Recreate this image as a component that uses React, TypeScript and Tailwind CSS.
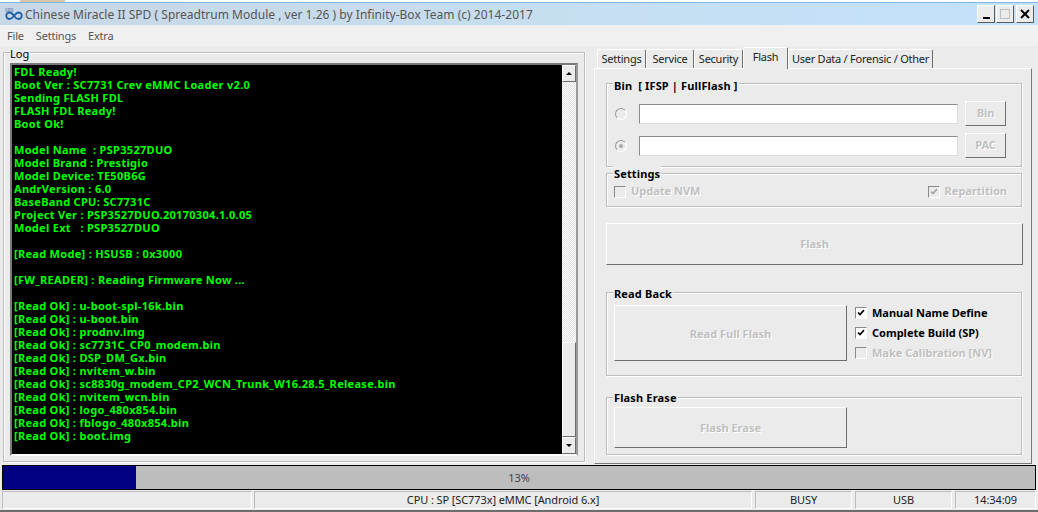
import React from "react";

const FONT = "font-['Noto_Sans','Open_Sans',sans-serif]";

const LOG_LINES = [
  "FDL Ready!",
  "Boot Ver : SC7731 Crev eMMC Loader v2.0",
  "Sending FLASH FDL",
  "FLASH FDL Ready!",
  "Boot Ok!",
  "",
  "Model Name  : PSP3527DUO",
  "Model Brand : Prestigio",
  "Model Device: TE50B6G",
  "AndrVersion : 6.0",
  "BaseBand CPU: SC7731C",
  "Project Ver : PSP3527DUO.20170304.1.0.05",
  "Model Ext   : PSP3527DUO",
  "",
  "[Read Mode] : HSUSB : 0x3000",
  "",
  "[FW_READER] : Reading Firmware Now ...",
  "",
  "[Read Ok] : u-boot-spl-16k.bin",
  "[Read Ok] : u-boot.bin",
  "[Read Ok] : prodnv.img",
  "[Read Ok] : sc7731C_CP0_modem.bin",
  "[Read Ok] : DSP_DM_Gx.bin",
  "[Read Ok] : nvitem_w.bin",
  "[Read Ok] : sc8830g_modem_CP2_WCN_Trunk_W16.28.5_Release.bin",
  "[Read Ok] : nvitem_wcn.bin",
  "[Read Ok] : logo_480x854.bin",
  "[Read Ok] : fblogo_480x854.bin",
  "[Read Ok] : boot.img",
];

const TABS = [
  { label: "Settings", w: "w-[49px]" },
  { label: "Service", w: "w-[48px]" },
  { label: "Security", w: "w-[49px]" },
  { label: "Flash", w: "w-[45px]", active: true },
  { label: "User Data / Forensic / Other", w: "w-[145px]" },
];

const raised =
  "border border-t-white border-l-white border-r-[#6d6d6d] border-b-[#6d6d6d] bg-[#ebebeb]";

// etched group box with the caption sitting on the top border
const Group = ({
  title,
  className,
  captionTop,
  children,
}: {
  title: string;
  className: string;
  captionTop: string;
  children?: React.ReactNode;
}) => (
  <div
    className={`relative border border-[#bcbcbc] shadow-[1px_1px_0_#fff,inset_1px_1px_0_#fff] ${className}`}
  >
    <span
      className={`absolute left-[6px] bg-[#ebebeb] px-px text-[11px] leading-[15px] font-bold tracking-[0.15px] whitespace-pre text-black ${captionTop}`}
    >
      {title}
    </span>
    {children}
  </div>
);

const DisabledButton = ({
  label,
  className,
}: {
  label: string;
  className: string;
}) => (
  <div
    className={`flex items-center justify-center text-[11px] font-bold text-[#c0c0c0] [text-shadow:1px_1px_0_#fff] ${raised} ${className}`}
  >
    {label}
  </div>
);

const Radio = ({ on }: { on?: boolean }) => (
  <div className="flex h-[12px] w-[12px] shrink-0 items-center justify-center rounded-full border border-t-[#9a9a9a] border-l-[#9a9a9a] border-r-white border-b-white bg-[#ebebeb]">
    {on && <div className="h-[4px] w-[4px] rounded-full bg-[#a8a8a8]" />}
  </div>
);

const Check = ({ on, off }: { on?: boolean; off?: boolean }) => (
  <div
    className={`flex h-[12px] w-[12px] shrink-0 items-center justify-center border border-t-[#8a8a8a] border-l-[#8a8a8a] border-r-white border-b-white ${
      off ? "bg-[#ebebeb]" : "bg-white"
    }`}
  >
    {on && (
      <svg width="8" height="8" viewBox="0 0 8 8">
        <path
          d="M1 3.5 L3 5.5 L7 1.2"
          fill="none"
          stroke={off ? "#a4a4a4" : "#000"}
          strokeWidth="1.7"
        />
      </svg>
    )}
  </div>
);

const CheckRow = ({
  label,
  on,
  off,
}: {
  label: string;
  on?: boolean;
  off?: boolean;
}) => (
  <div className="flex h-[20px] items-center gap-[5px]">
    <Check on={on} off={off} />
    <span
      className={`text-[11px] font-bold ${
        off ? "text-[#c0c0c0] [text-shadow:1px_1px_0_#fff]" : "text-black"
      }`}
    >
      {label}
    </span>
  </div>
);

const Logo = () => (
  <svg width="18" height="16" viewBox="0 0 18 16" className="shrink-0">
    <text x="0" y="6" fontSize="4.5" fontWeight="bold" fill="#7c94ba">
      SPD
    </text>
    <path
      d="M9 10 C7.5 7.5 6 6.5 4.5 6.5 A3.2 3.2 0 0 0 4.5 13 C6 13 7.5 12 9 10 C10.5 8 12 6.5 13.5 6.5 A3.2 3.2 0 0 1 13.5 13 C12 13 10.5 12 9 10 Z"
      fill="none"
      stroke="#1f5fa8"
      strokeWidth="1.8"
    />
  </svg>
);

const TitleButton = ({ children }: { children: React.ReactNode }) => (
  <div className="flex h-[18px] w-[18px] items-center justify-center border border-t-white border-l-white border-r-[#5a5a5a] border-b-[#5a5a5a] bg-[#ececec]">
    {children}
  </div>
);

const Arrow = ({ up }: { up?: boolean }) => (
  <div className={`flex h-[17px] w-full shrink-0 items-center justify-center ${raised}`}>
    <div
      className={`h-0 w-0 border-x-[3px] border-x-transparent ${
        up ? "border-b-[3px] border-b-black" : "border-t-[3px] border-t-black"
      }`}
    />
  </div>
);

const StatusCell = ({
  className,
  children,
}: {
  className: string;
  children?: React.ReactNode;
}) => (
  <div
    className={`flex h-[18px] items-center justify-center border border-t-[#bdbdbd] border-l-[#bdbdbd] border-r-white border-b-white text-[11px] tracking-[-0.1px] text-[#222] ${className}`}
  >
    {children}
  </div>
);

export default function App() {
  return (
    <div
      className={`flex h-[512px] w-[1038px] flex-col overflow-hidden bg-[#ebebeb] ${FONT}`}
    >
      {/* strip of the desktop above the window */}
      <div className="flex h-[2px] shrink-0 bg-white">
        <div className="ml-[20px] w-[45px] bg-[#d9c4a8]" />
      </div>
      <div className="h-px shrink-0 bg-[#7db6e6]" />

      {/* Title bar */}
      <div className="flex h-[22px] shrink-0 items-center bg-gradient-to-r from-[#c8d7e5] via-[#c6deef] to-[#c4e2fc] pr-[4px] pl-[5px]">
        <Logo />
        <span className="mt-px ml-[2px] text-[12px] tracking-[0.02px] whitespace-nowrap text-[#555]">
          Chinese Miracle II SPD ( Spreadtrum Module , ver 1.26 ) by Infinity-Box Team (c) 2014-2017
        </span>
        <div className="ml-auto flex items-center">
          <TitleButton>
            <div className="mt-[8px] h-[2px] w-[7px] bg-black" />
          </TitleButton>
          <div className="ml-px">
            <TitleButton>
              <div className="h-[10px] w-[10px] border border-[#bdbdbd]" />
            </TitleButton>
          </div>
          <div className="ml-[2px]">
            <TitleButton>
              <svg width="10" height="10" viewBox="0 0 10 10">
                <path d="M1 1 L9 9 M9 1 L1 9" stroke="#000" strokeWidth="2" />
              </svg>
            </TitleButton>
          </div>
        </div>
      </div>

      {/* Menu */}
      <div className="flex h-[21px] shrink-0 items-center gap-[12px] bg-[#f0f0f0] pt-[2px] pl-[7px] text-[11px] tracking-[-0.2px] text-[#555]">
        <span>File</span>
        <span>Settings</span>
        <span>Extra</span>
      </div>

      {/* Main area */}
      <div className="flex h-[418px] shrink-0 pt-px">
        {/* Log */}
        <div className="w-[594px] pt-[5px] pl-[3px]">
          <div className="relative h-[410px] w-[582px] border border-[#bcbcbc] pt-[10px] pl-[6px] shadow-[1px_1px_0_#fff,inset_1px_1px_0_#fff]">
            <span className="absolute top-[-6px] left-[6px] bg-[#ebebeb] pr-px text-[11px] leading-[13px] text-black">
              Log
            </span>
            <div className="flex h-[393px] w-[568px] border-2 border-t-[#7a7a7a] border-r-[#9a9a9a] border-b-white border-l-[#7a7a7a] bg-black">
              <div className="min-w-0 flex-1 pl-[2px] text-[11px] leading-[13px] font-bold tracking-[0.3px] whitespace-pre text-[#00ff00]">
                {LOG_LINES.map((line, i) => (
                  <div key={i} className="h-[13px]">
                    {line}
                  </div>
                ))}
              </div>
              {/* scrollbar */}
              <div className="flex w-[14px] shrink-0 flex-col bg-[#f4f4f4]">
                <Arrow up />
                <div className="flex-1 bg-[repeating-conic-gradient(#e0e0e0_0_25%,#fff_0_50%)] bg-[length:2px_2px]" />
                <div className={`h-[95px] shrink-0 ${raised}`} />
                <Arrow />
              </div>
            </div>
          </div>
        </div>

        {/* Tabs */}
        <div className="w-[438px]">
          <div className="flex h-[21px] items-end pl-[3px]">
            {TABS.map((t) => (
              <div
                key={t.label}
                className={`flex items-center justify-center rounded-t-[2px] border-t border-r border-l border-t-white border-r-[#6d6d6d] border-l-white text-[11px] tracking-[-0.25px] whitespace-nowrap text-[#222] ${t.w} ${
                  t.active ? "relative z-10 mb-[-1px] h-[22px] bg-[#ebebeb] pb-[3px]" : "h-[19px]"
                }`}
              >
                {t.label}
              </div>
            ))}
          </div>
          <div className="h-[396px] w-[438px] border border-t-white border-r-[#7a7a7a] border-b-[#7a7a7a] border-l-white pt-[14px] pl-[11px]">
            <Group
              title="Bin  [ IFSP | FullFlash ]"
              captionTop="top-[-6px]"
              className="h-[84px] w-[416px]"
            >
              <div className="flex h-full flex-col gap-[7px] pt-[17px] pr-[15px] pl-[8px]">
                {[
                  { on: false, label: "Bin" },
                  { on: true, label: "PAC" },
                ].map((row) => (
                  <div key={row.label} className="flex h-[25px] items-center">
                    <Radio on={row.on} />
                    <div className="ml-[12px] h-[20px] w-[320px] border border-t-[#8a8a8a] border-r-[#dcdcdc] border-b-[#dcdcdc] border-l-[#8a8a8a] bg-white" />
                    <DisabledButton label={row.label} className="ml-[7px] h-[25px] w-[41px]" />
                  </div>
                ))}
              </div>
            </Group>
            <Group title="Settings" captionTop="top-[-8px]" className="mt-[6px] h-[34px] w-[416px]">
              <div className="flex h-full items-center justify-between pt-[3px] pr-[14px] pl-[7px]">
                <CheckRow label="Update NVM" off />
                <CheckRow label="Repartition" on off />
              </div>
            </Group>
            <DisabledButton label="Flash" className="mt-[16px] h-[42px] w-[417px]" />
            <Group title="Read Back" captionTop="top-[-7px]" className="mt-[27px] h-[84px] w-[416px]">
              <div className="flex pt-[12px] pl-[7px]">
                <DisabledButton label="Read Full Flash" className="h-[56px] w-[233px] pt-[2px]" />
                <div className="-mt-[2px] ml-[8px] flex flex-col">
                  <CheckRow label="Manual Name Define" on />
                  <CheckRow label="Complete Build (SP)" on />
                  <CheckRow label="Make Calibration [NV]" off />
                </div>
              </div>
            </Group>
            <Group title="Flash Erase" captionTop="top-[-8px]" className="mt-[21px] h-[58px] w-[416px]">
              <div className="pt-[9px] pl-[7px]">
                <DisabledButton label="Flash Erase" className="h-[41px] w-[233px] pt-[2px]" />
              </div>
            </Group>
          </div>
        </div>
      </div>

      {/* Progress */}
      <div className="mx-[2px] mt-px flex h-[25px] w-[1034px] shrink-0 border border-black bg-[#bdbdbd]">
        <div className="relative flex w-full items-center justify-center pt-px text-[11px] text-[#444]">
          <div className="absolute inset-y-0 left-0 w-[133px] bg-[#000080]" />
          13%
        </div>
      </div>

      {/* Status bar */}
      <div className="mt-px flex shrink-0 gap-[2px] pl-[2px]">
        <StatusCell className="w-[250px]" />
        <StatusCell className="w-[498px]">CPU : SP [SC773x] eMMC [Android 6.x]</StatusCell>
        <StatusCell className="ml-px w-[97px]">BUSY</StatusCell>
        <StatusCell className="ml-px w-[97px]">USB</StatusCell>
        <StatusCell className="ml-px w-[81px]">14:34:09</StatusCell>
      </div>
      <div className="mt-auto h-[2px] shrink-0 bg-[#6d6d6d]" />
    </div>
  );
}
